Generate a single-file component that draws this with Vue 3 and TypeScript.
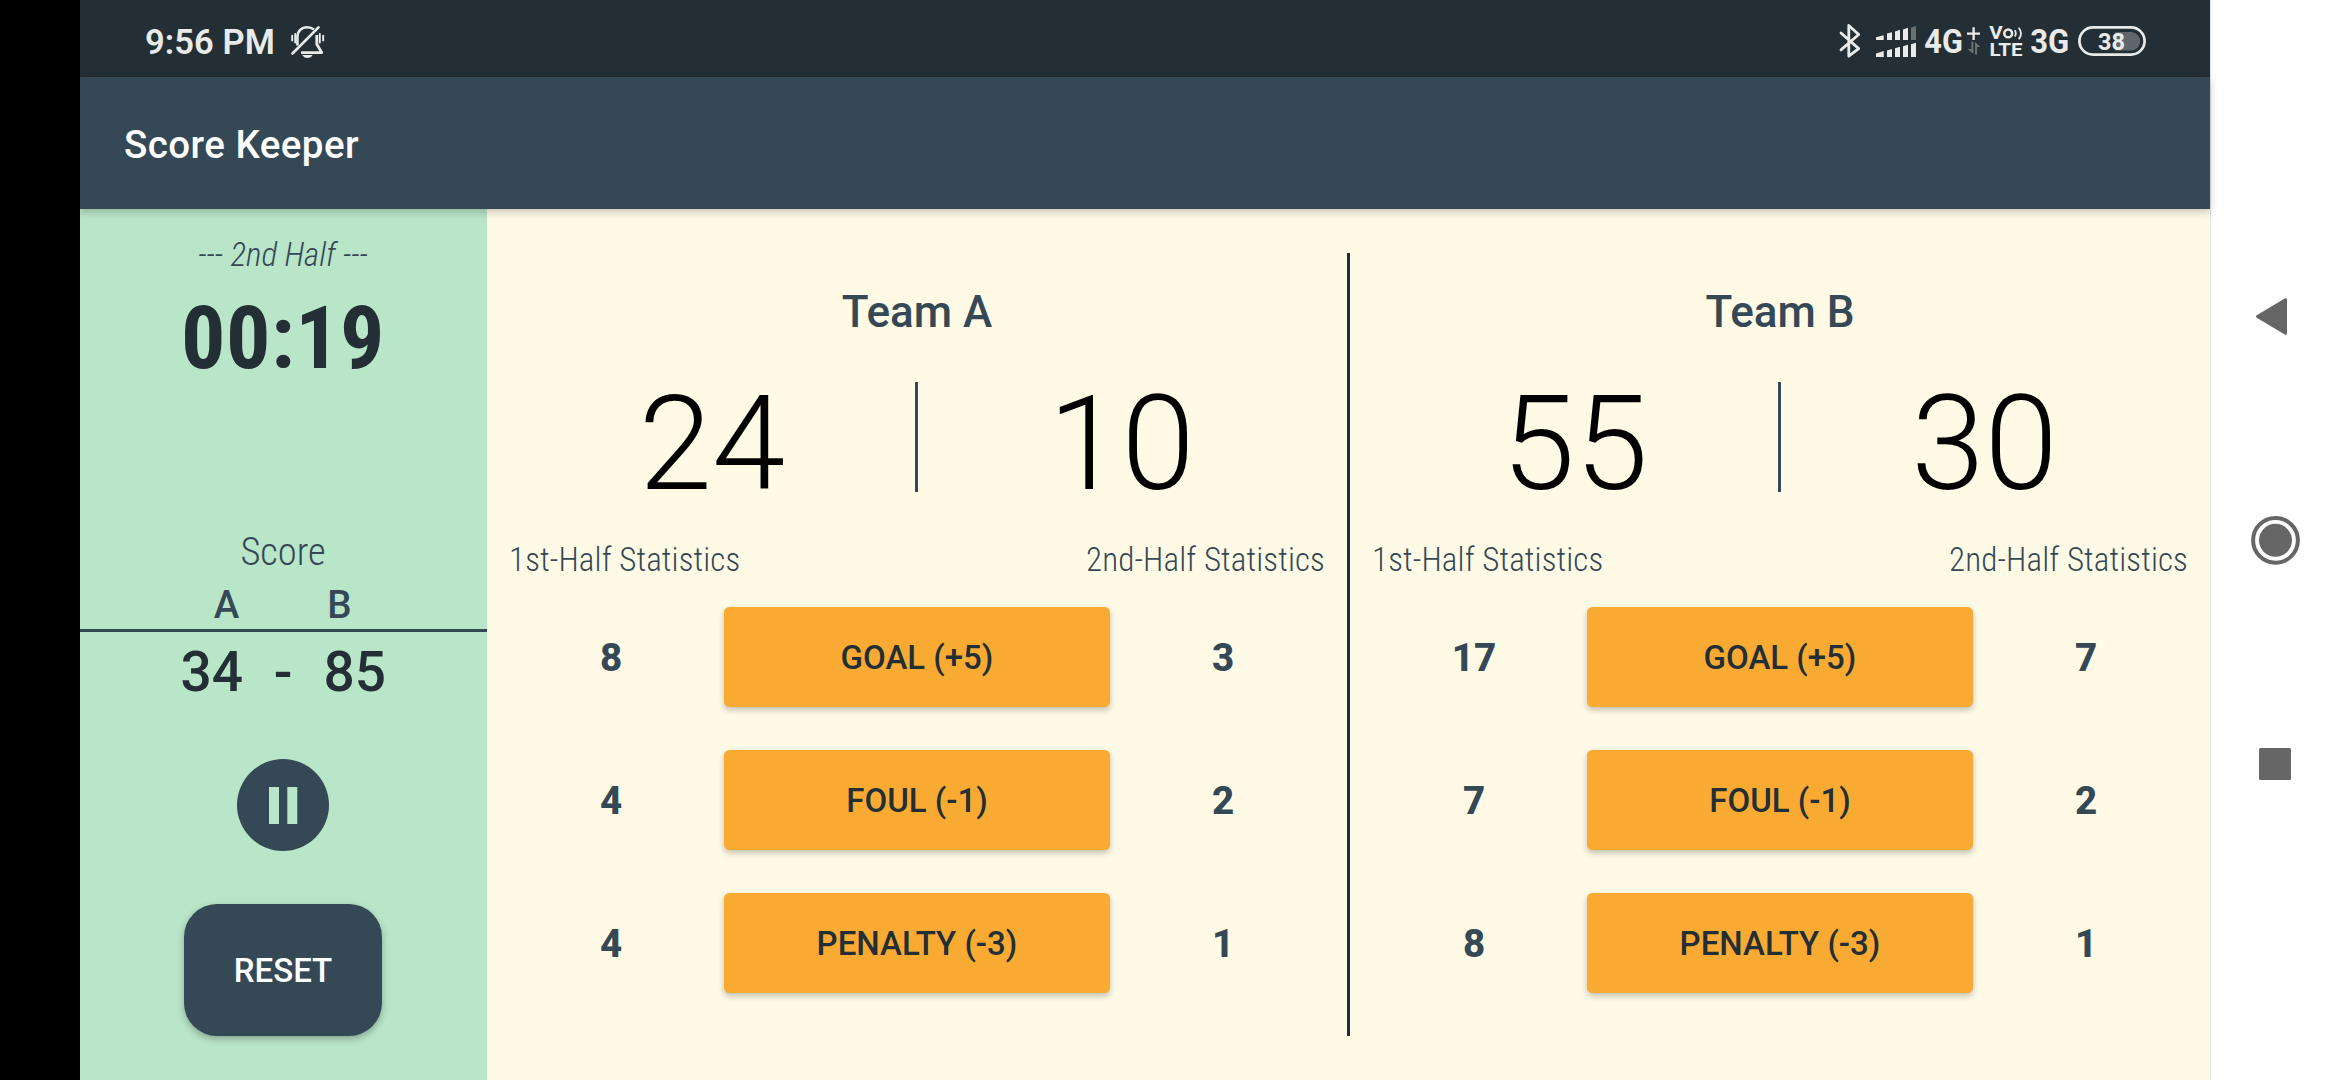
<script setup lang="ts">
interface Stat {
  label: string
  first: number
  second: number
}

interface Team {
  id: string
  name: string
  first: number
  second: number
  total: number
  stats: Stat[]
}

const teams: Team[] = [
  {
    id: 'A',
    name: 'Team A',
    first: 24,
    second: 10,
    total: 34,
    stats: [
      { label: 'GOAL (+5)', first: 8, second: 3 },
      { label: 'FOUL (-1)', first: 4, second: 2 },
      { label: 'PENALTY (-3)', first: 4, second: 1 },
    ],
  },
  {
    id: 'B',
    name: 'Team B',
    first: 55,
    second: 30,
    total: 85,
    stats: [
      { label: 'GOAL (+5)', first: 17, second: 7 },
      { label: 'FOUL (-1)', first: 7, second: 2 },
      { label: 'PENALTY (-3)', first: 8, second: 1 },
    ],
  },
]
</script>

<template>
  <div class="screen">
    <div class="cutout"></div>
    <div class="app">
      <header class="status">
        <span class="clock">9:56 PM</span>
        <svg class="bell" width="36" height="36" viewBox="0 0 36 36" fill="none" stroke="#e9ebea">
          <path d="M7.4 21.5V13.2C7.4 7 11.6 3.2 17.2 3.2c2.8 0 5 .9 6.8 2.4" stroke-width="2.6" />
          <path d="M26.8 11v9.2l5 8.4H11" stroke-width="2.8" stroke-linejoin="round" />
          <path d="M12.3 31h10.400c-1 2-3 3-5.200 3s-4.200-1-5.200-3z" fill="#e9ebea" stroke="none" />
          <path d="M2.500 29.500L28.500 3.400" stroke-width="2.700" stroke-linecap="round" />
          <path d="M2.200 11.800v4.800M5.200 10v8.500M29.800 10v8.500M33.200 11.800v4.800" stroke-width="1.900" stroke-linecap="round" />
        </svg>
        <div class="indicators">
          <svg width="24" height="77" viewBox="1838 0 24 77" fill="none" stroke="#e9ebea" stroke-width="2.800" stroke-linecap="round" stroke-linejoin="round">
            <path d="M1841 33l17.700 15.600-9.900 7.600V25.500l9.900 9-17.700 15.400" />
          </svg>
          <svg class="signal" width="42" height="77" viewBox="1875 0 42 77" fill="#e9ebea">
            <path d="M1876 37.200l7.700-2v4.800h-7.700zM1887 33.600l5-1.400v7.800h-5zM1895 31.400l5-1.600v10.200h-5zM1903 29.400l5-1.600v12.200h-5z" />
            <path d="M1911 27.600l5-1.600v14h-5z" fill="#68726f" />
            <path d="M1876 53.400l7.700-2.400v6h-7.700zM1887 50.400l5-1.500v8.100h-5zM1895 48.200l5-1.500v10.300h-5zM1903 46.200l5-1.500v12.300h-5zM1911 44.200l5-1.500v14.300h-5z" />
          </svg>
          <svg class="net" width="60" height="77" viewBox="1922 0 60 77">
            <text x="1924.300" y="52.800" font-size="32.500" textLength="38.500" lengthAdjust="spacingAndGlyphs">4G</text>
            <path d="M1967 33.600h13M1973.600 27.300v12.700" stroke="#e9ebea" stroke-width="2.300" fill="none" />
            <path d="M1971.400 41.700h2V54l-6-5h4zM1975 54.500h2V47h3.500l-5.500-5z" fill="#69726f" />
          </svg>
          <svg class="net volte" width="38" height="77" viewBox="1986 0 38 77">
            <text x="1989.200" y="38.700" font-size="17.500" textLength="13.500" lengthAdjust="spacingAndGlyphs">V</text>
            <circle cx="2008.200" cy="33.400" r="3.900" fill="none" stroke="#e9ebea" stroke-width="2.600" />
            <path d="M2014.800 30.300c1.300 2 1.300 4.300 0 6.300M2018.800 27.800c2.700 3.600 2.700 8 0 11.400" fill="none" stroke="#e9ebea" stroke-width="1.800" />
            <text x="1989.500" y="56" font-size="18.500" textLength="33" lengthAdjust="spacingAndGlyphs">LTE</text>
          </svg>
          <svg class="net" width="42" height="77" viewBox="2029 0 42 77">
            <text x="2030.200" y="52.800" font-size="32.500" textLength="39" lengthAdjust="spacingAndGlyphs">3G</text>
          </svg>
          <svg class="net" width="70" height="77" viewBox="2077 0 70 77">
            <rect x="2079.400" y="27.400" width="65.200" height="27.200" rx="13.600" fill="none" stroke="#e9ebea" stroke-width="2.700" />
            <path d="M2115 32h16a9.200 9.200 0 0 1 0 18.400h-16z" fill="#5f676c" />
            <text x="2098" y="50" font-size="24.500" textLength="27" lengthAdjust="spacingAndGlyphs">38</text>
          </svg>
        </div>
      </header>

      <div class="appbar">Score Keeper</div>

      <div class="body">
        <aside class="side">
          <div class="half">--- 2nd Half ---</div>
          <div class="timer">00:19</div>
          <div class="score-title">Score</div>
          <div class="letters">
            <span v-for="team in teams" :key="team.id">{{ team.id }}</span>
          </div>
          <div class="rule"></div>
          <div class="totals">
            <span>{{ teams[0].total }}</span>
            <span>-</span>
            <span>{{ teams[1].total }}</span>
          </div>
          <button class="pause" aria-label="Pause">
            <svg width="92" height="92" viewBox="0 0 92 92">
              <circle cx="46" cy="46" r="46" fill="#344955" />
              <path d="M32 28h10v37H32zM50.300 28h10v37h-10z" fill="#b9e5c9" />
            </svg>
          </button>
          <button class="reset">RESET</button>
        </aside>

        <main class="board">
          <template v-for="(team, i) in teams" :key="team.id">
            <div v-if="i > 0" class="divider"></div>
            <section class="team">
              <h2 class="name">{{ team.name }}</h2>
              <div class="points">
                <span>{{ team.first }}</span>
                <i class="bar"></i>
                <span>{{ team.second }}</span>
              </div>
              <div class="captions">
                <span>1st-Half Statistics</span>
                <span>2nd-Half Statistics</span>
              </div>
              <div v-for="stat in team.stats" :key="stat.label" class="row">
                <span class="count">{{ stat.first }}</span>
                <button class="action">{{ stat.label }}</button>
                <span class="count">{{ stat.second }}</span>
              </div>
            </section>
          </template>
        </main>
      </div>
    </div>

    <nav class="nav">
      <svg width="128" height="1080" viewBox="2211 0 128 1080" fill="#666">
        <path d="M2257.500 316.500l28-16.700v33.400z" stroke="#666" stroke-width="3" stroke-linejoin="round" />
        <circle cx="2275.500" cy="540.300" r="22.400" fill="none" stroke="#666" stroke-width="4" />
        <circle cx="2275.500" cy="540.300" r="16.500" />
        <rect x="2259" y="748" width="32" height="32" rx="1.500" />
      </svg>
    </nav>
  </div>
</template>

<style>
body {
  margin: 0;
  background: #fff;
}
</style>

<style scoped>
.screen {
  display: flex;
  width: 2340px;
  height: 1080px;
  overflow: hidden;
  font-family: Roboto, 'Liberation Sans', sans-serif;
  color: #344955;
}
button {
  font: inherit;
  border: 0;
  padding: 0;
  margin: 0;
}
.cutout {
  width: 80px;
  background: #000;
}
.app {
  width: 2130px;
  display: flex;
  flex-direction: column;
}
.nav {
  box-sizing: border-box;
  width: 130px;
  border-left: 1px solid #e1e3e3;
  background: #fff;
}
.nav svg {
  display: block;
}
.status {
  display: flex;
  align-items: center;
  height: 77px;
  padding: 0 63px 0 65px;
  background: #232f34;
  color: #e9ebea;
}
.clock {
  width: 130px;
  white-space: nowrap;
  font-size: 34.5px;
  font-weight: 600;
  line-height: 77px;
  padding-top: 8px;
  letter-spacing: 0.1px;
}
.bell {
  margin: 6px 0 0 15px;
}
.indicators {
  display: flex;
  margin-left: auto;
}
.indicators svg {
  display: block;
}
.signal {
  margin-left: 13px;
}
.net {
  margin-left: 5px;
  fill: #e9ebea;
  font-weight: 700;
}
.volte {
  margin-left: 4px;
}
.net:last-child {
  margin-left: 6px;
}
.appbar {
  position: relative;
  z-index: 1;
  height: 132px;
  line-height: 135px;
  padding-left: 44px;
  background: #344955;
  color: #fff;
  font-size: 38.5px;
  font-weight: 500;
  letter-spacing: 0.45px;
  box-shadow: 0 3px 8px rgba(0, 0, 0, 0.22);
}
.body {
  flex: 1;
  display: flex;
}
.side {
  box-sizing: border-box;
  width: 407px;
  padding-right: 1px;
  background: #b9e5c9;
  display: flex;
  flex-direction: column;
  align-items: center;
}
.half,
.timer,
.score-title,
.captions {
  font-family: 'Roboto Condensed', Roboto, sans-serif;
  font-stretch: 75%;
}
.half {
  margin-top: 23px;
  font-size: 33px;
  line-height: 46px;
  font-weight: 300;
  font-style: italic;
}
.timer {
  margin-top: 8px;
  font-size: 88px;
  line-height: 104px;
  font-weight: 700;
  letter-spacing: 0.4px;
  color: #232f34;
}
.score-title {
  margin-top: 139px;
  font-size: 38.5px;
  line-height: 46px;
  font-weight: 300;
}
.letters {
  display: grid;
  grid-template-columns: 113px 113px;
  margin-top: 7px;
  font-size: 38.5px;
  line-height: 46px;
  font-weight: 500;
  text-align: center;
}
.rule {
  align-self: stretch;
  height: 3px;
  margin-top: 1px;
  margin-right: -1px;
  background: #344955;
}
.totals {
  display: grid;
  grid-template-columns: 62px 81px 62px;
  margin-top: 8px;
  font-size: 55px;
  line-height: 64px;
  font-weight: 500;
  text-align: center;
  color: #232f34;
}
.pause {
  margin-top: 55px;
  width: 92px;
  height: 92px;
  background: none;
}
.pause svg {
  display: block;
}
.reset {
  margin-top: 53px;
  width: 198px;
  height: 132px;
  border-radius: 33px;
  background: #344955;
  color: #fff;
  font-size: 33px;
  font-weight: 500;
  box-shadow: 0 3px 7px rgba(0, 0, 0, 0.28);
}
.board {
  flex: 1;
  display: flex;
  background: #fffae6;
}
.divider {
  width: 3px;
  margin: 44px 0;
  background: #232f34;
}
.team {
  box-sizing: border-box;
  width: 860px;
  padding: 77px 22px 0;
}
.name {
  margin: 0;
  font-size: 44px;
  line-height: 52px;
  font-weight: 500;
  text-align: center;
}
.points {
  display: grid;
  grid-template-columns: 406px 3px 1fr;
  grid-template-rows: 110px;
  margin-top: 44px;
  height: 110px;
  line-height: 125px;
  font-size: 132px;
  font-weight: 300;
  text-align: center;
  color: #000;
}
.bar {
  background: #344955;
}
.captions {
  display: flex;
  justify-content: space-between;
  margin-top: 46px;
  font-size: 33px;
  line-height: 44px;
  font-weight: 300;
  letter-spacing: 0.13px;
}
.row {
  display: grid;
  grid-template-columns: 204px 1fr 204px;
  align-items: center;
  height: 100px;
  margin-top: 43px;
}
.captions + .row {
  margin-top: 25px;
}
.count {
  font-size: 38.5px;
  font-weight: 800;
  text-align: center;
}
.action {
  height: 100px;
  margin: 0 11px;
  border-radius: 5.5px;
  background: #f9aa33;
  color: #232f34;
  font-size: 33px;
  font-weight: 500;
  box-shadow: 0 3px 6px rgba(0, 0, 0, 0.24);
}
</style>
